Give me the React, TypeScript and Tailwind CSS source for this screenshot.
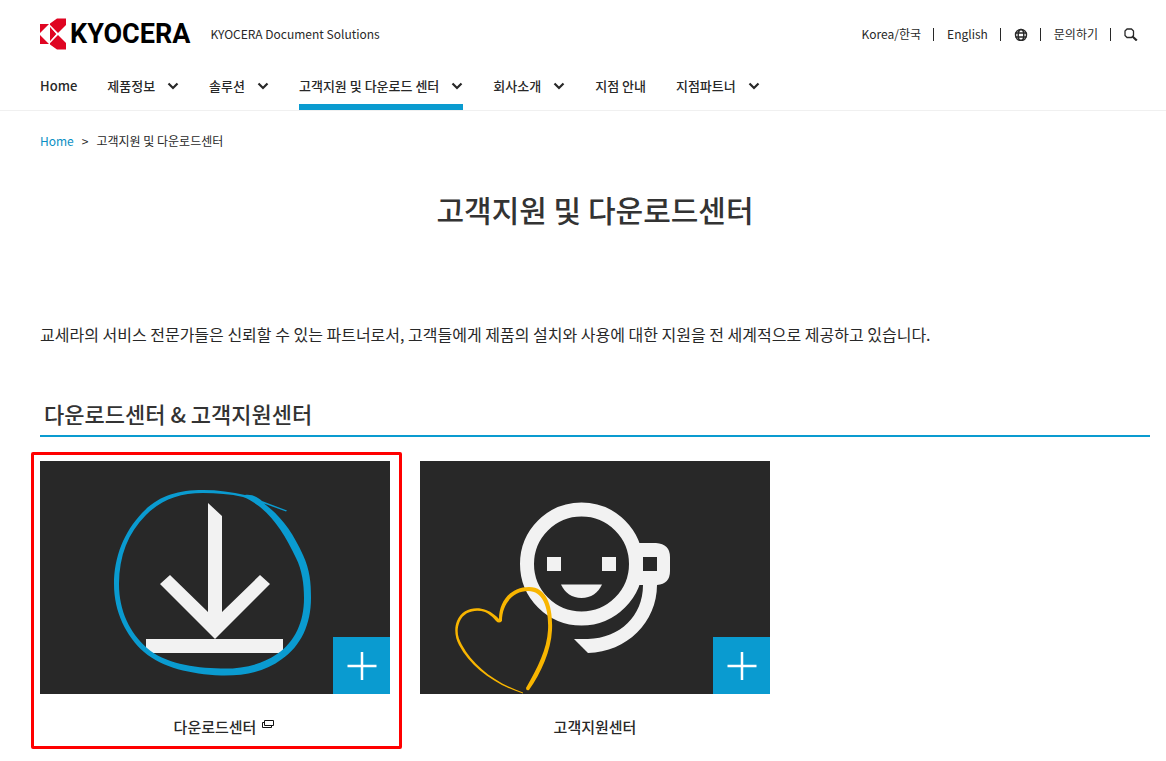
import React from 'react';

interface NavItem {
  label: string;
  hasMenu?: boolean;
  active?: boolean;
}

const NAV_ITEMS: NavItem[] = [
  { label: 'Home' },
  { label: '제품정보', hasMenu: true },
  { label: '솔루션', hasMenu: true },
  { label: '고객지원 및 다운로드 센터', hasMenu: true, active: true },
  { label: '회사소개', hasMenu: true },
  { label: '지점 안내' },
  { label: '지점파트너', hasMenu: true },
];

const LogoMark = () => (
  <svg width="26" height="32" viewBox="0 0 26 32" aria-hidden="true">
    {/* Stem corners */}
    <path d="M0 6H9L0 15Z M0 17L9 26H0Z" fill="#df0522" />
    {/* Right half of the centre diamond */}
    <path d="M10 8.5L16.500 16L10 23.500Z" fill="#df0522" />
    {/* Arms */}
    <path d="M10 5.500L17 0.500H26V7L18 15L10 7Z M10 26.500L17 31.500H26V25L18 17L10 25Z" fill="#df0522" />
    <path d="M10 7.800L17.300 16L10 24.200" fill="none" stroke="#fff" strokeWidth="1.200" />
  </svg>
);

const Chevron = () => (
  <svg width="12" height="8" viewBox="0 0 12 8" fill="none" aria-hidden="true">
    <path d="M1.5 1.5L6 6L10.5 1.5" stroke="#282828" strokeWidth="2.2" />
  </svg>
);

const Globe = () => (
  <svg width="14" height="14" viewBox="0 0 14 14" fill="none" stroke="#282828" strokeWidth="1.4" aria-hidden="true">
    <circle cx="7" cy="8" r="5.5" />
    <ellipse cx="7" cy="8" rx="2.8" ry="5.5" />
    <path d="M1.5 6H12.5M1.5 10H12.5" />
  </svg>
);

const SearchIcon = () => (
  <svg width="14" height="14" viewBox="0 0 14 14" fill="none" stroke="#282828" aria-hidden="true">
    <path d="M3 2H7.5L9.5 4V8.5L7.5 10.5H3L1 8.5V4Z" strokeWidth="1.3" strokeLinejoin="round" />
    <path d="M8.5 9.500L12.800 13.500" strokeWidth="2.200" />
  </svg>
);

const NewWindow = () => (
  <svg width="12" height="8" viewBox="0 0 12 8" fill="none" stroke="#111" aria-hidden="true">
    <path d="M2.5 0.5H11.5V5.5H2.5Z" />
    <path d="M2.5 2.5H0.5V7.5H9.5V5.5" />
  </svg>
);

const Divider = () => <span className="mr-px h-[13px] w-px bg-[#282828]" />;

const DownloadArt = () => (
  <svg viewBox="0 0 350 233" className="block w-full" aria-hidden="true">
    <path d="M168 42L182 55V151L220 114L230 123L175 178L120 123L130 114L168 151Z" fill="#f2f2f2" />
    <path d="M106 178H243V192H106Z" fill="#f2f2f2" />
    {/* Brush circle, thin at the top left and heavy at the right */}
    <path
      fill="#0a9bd0"
      d="M246 50.5L224 42.5C242 56 253 72 263 94C270 109 271 122 271 137C271 163 261 185 242 198C225 211 204 215 181 214.500C150 213 123 207 104 191C86 175 74 151 74 123C74 96 84 71 102 52C118 35 137 29 163 29C178 29 192 31 205 34C213 33 218 37 222 40L247 49.500Z M220 46C216 43 209 38 203 36C190 33 177 32 163 32C139 32 121 39 106 54C88 72 79 95 79 123C79 150 90 172 107 187C124 202 153 207 181 207.500C202 208 221 204 237 193C255 181 264 161 264 137C264 123 262 109 256 97C246 76 235 58 220 46Z"
    />
  </svg>
);

const SupportArt = () => (
  <svg viewBox="0 0 350 233" className="block w-full" aria-hidden="true">
    <circle cx="161.500" cy="103" r="54.500" fill="none" stroke="#f2f2f2" strokeWidth="14" />
    <path
      fill="#f2f2f2"
      fillRule="evenodd"
      d="M216 82H236Q250 83 250 96V110Q250 123 237 124C237 161 207 191 168 192L154 178H168C200 177 223 155 223 124H216Z M223 96V110H237V96Z"
    />
    <path d="M127 96H141V110H127Z M182 96H196V110H182Z" fill="#f2f2f2" />
    <path d="M141 123.500H182C178 132 171 137 161.500 137C152 137 145 132 141 123.500Z" fill="#f2f2f2" />
    {/* Hand drawn heart */}
    <path
      fill="#f8b500"
      d="M103 232.500C76 224 51 207 39 184C35 177 34 167 37 160C42 148 55 145 66 149C72 151 76 155 79 158C79 140 91 126 109 126C128 126 133 148 132 169C131 190 121 212 109 229Q106 230 106 227C118 206 127 188 128 169C129 149 124 130 108 130C93 130 82 143 82 160Q79 163 76 160C72 155 69 153 65 151C56 148 44 150 39.500 161C36 170 38 177 42 184C54 206 76 222 103 231.500Z"
    />
  </svg>
);

interface CardProps {
  title: string;
  art: React.ReactNode;
  external?: boolean;
  highlighted?: boolean;
}

const Card = ({ title, art, external, highlighted }: CardProps) => (
  <a href="#" className="relative block">
    <div className="relative bg-[#282828]">
      {art}
      <span className="absolute right-0 bottom-0 flex size-[57px] items-center justify-center bg-[#0a9bd0]">
        <svg width="30" height="28" viewBox="0 0 30 28" stroke="#fff" strokeWidth="2.500" aria-hidden="true">
          <path d="M0.500 14H29.500M15 0V28" />
        </svg>
      </span>
    </div>
    <h3 className="mt-5 text-center text-[15px] leading-[26px] font-medium text-[#282828]">
      <span className="relative">
        {title}
        {external && (
          <span className="absolute top-1 left-full ml-[6px]"><NewWindow /></span>
        )}
      </span>
    </h3>
    {highlighted && (
      <span className="pointer-events-none absolute -top-[9px] -right-3 -bottom-[9px] -left-[9px] rounded-[2px] border-3 border-[#ff0000]" />
    )}
  </a>
);

const App: React.FC = () => {
  return (
    <div className="min-h-screen bg-white font-['Noto_Sans_CJK_KR','Noto_Sans',sans-serif] text-[#282828]">
      <header className="border-b border-[#f0f0f0]">
        <div className="flex items-center justify-between pt-[18px] pr-7 pl-10">
          <div className="flex items-center">
            <a href="#" className="flex items-center gap-1 text-black">
              <LogoMark />
              <span className="font-[Roboto,sans-serif] text-[27px] leading-8 font-bold">KYOCERA</span>
            </a>
            <span className="ml-5 text-[12px]">KYOCERA Document Solutions</span>
          </div>
          <div className="flex items-center gap-3 text-[12px] leading-5">
            <a href="#">Korea/한국</a>
            <Divider />
            <a href="#">English</a>
            <Divider />
            <button type="button" aria-label="Language"><Globe /></button>
            <Divider />
            <a href="#">문의하기</a>
            <Divider />
            <button type="button" aria-label="Search"><SearchIcon /></button>
          </div>
        </div>
        <nav className="mt-[18px] flex gap-[30px] pl-10">
          {NAV_ITEMS.map((item) => (
            <a
              key={item.label}
              href="#"
              className={`flex h-[42px] items-start gap-3 border-b-6 pt-2 text-[13px] leading-5 font-medium ${item.active ? 'border-[#0a9bd0]' : 'border-transparent'}`}
            >
              {item.label}
              {item.hasMenu && <span className="flex h-5 items-center"><Chevron /></span>}
            </a>
          ))}
        </nav>
      </header>

      <main className="pr-4 pl-10">
        <div className="flex gap-2 pt-5 text-[12px] leading-5">
          <a href="#" className="text-[#0a8fc4]">Home</a>
          <span>&gt;</span>
          <span>고객지원 및 다운로드센터</span>
        </div>
        <h1 className="mt-9 text-center text-[30px] leading-[44px] font-medium text-[#333]">고객지원 및 다운로드센터</h1>
        <p className="mt-[91px] text-[16px] leading-6">
          교세라의 서비스 전문가들은 신뢰할 수 있는 파트너로서, 고객들에게 제품의 설치와 사용에 대한 지원을 전 세계적으로 제공하고 있습니다.
        </p>
        <h2 className="mt-[49px] border-b-2 border-[#0a9bd0] pb-1 pl-1 text-[22px] leading-9 font-medium text-[#333]">
          다운로드센터 &amp; 고객지원센터
        </h2>
        <div className="mt-6 grid grid-cols-3 gap-[30px] pb-5">
          <Card title="다운로드센터" art={<DownloadArt />} external highlighted />
          <Card title="고객지원센터" art={<SupportArt />} />
        </div>
      </main>
    </div>
  );
};

export default App;
